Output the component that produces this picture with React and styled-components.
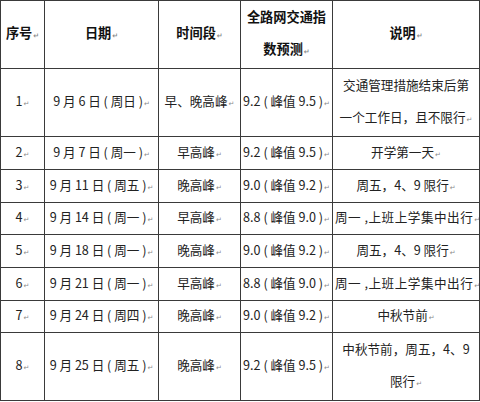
import React from "react";
import styled, { createGlobalStyle } from "styled-components";

const GlobalStyle = createGlobalStyle`
  html, body {
    margin: 0;
    padding: 0;
    background: #ffffff;
  }
  body {
    font-family: "Noto Sans CJK SC", "Liberation Sans", sans-serif;
    color: #222;
  }
`;

const Table = styled.table`
  border-collapse: collapse;
  table-layout: fixed;
  width: 479px;
  font-size: 12.6px;
`;

const Row = styled.tr`
  height: ${({ h }) => h}px;
`;

const Cell = styled.td`
  border: 1px solid #3a3a3a;
  padding: 0 2px;
  text-align: center;
  vertical-align: middle;
  line-height: ${({ lh }) => (lh ? `${lh}px` : "18px")};
  letter-spacing: ${({ wide }) => (wide ? "0.5px" : "0")};
  white-space: nowrap;
  overflow: hidden;
`;

const HeadCell = styled(Cell).attrs({ as: "th" })`
  font-weight: 700;
  font-size: 13.2px;
  color: #111;
`;

const Mark = styled.span`
  font-family: "DejaVu Sans", sans-serif;
  font-size: 7px;
  color: #8a8a8a;
  margin-left: 1px;
  letter-spacing: 0;
`;

const P = ({ children }) => (
  <>
    {children}
    <Mark>↵</Mark>
  </>
);

const rows = [
  {
    h: 65,
    no: "1",
    date: "9 月 6 日 ( 周日 )",
    time: "早、晚高峰",
    idx: "9.2 ( 峰值 9.5 )",
    note: ["交通管理措施结束后第", "一个工作日，且不限行"],
  },
  { h: 33, no: "2", date: "9 月 7 日 ( 周一 )", time: "早高峰", idx: "9.2 ( 峰值 9.5 )", note: ["开学第一天"] },
  { h: 33, no: "3", date: "9 月 11 日 ( 周五 )", time: "晚高峰", idx: "9.0 ( 峰值 9.2 )", note: ["周五，4、9 限行"] },
  { h: 32, no: "4", date: "9 月 14 日 ( 周一 )", time: "早高峰", idx: "8.8 ( 峰值 9.0 )", note: ["周一 ,上班上学集中出行"], wide: true },
  { h: 33, no: "5", date: "9 月 18 日 ( 周一 )", time: "晚高峰", idx: "9.0 ( 峰值 9.2 )", note: ["周五，4、9 限行"] },
  { h: 33, no: "6", date: "9 月 21 日 ( 周一 )", time: "早高峰", idx: "8.8 ( 峰值 9.0 )", note: ["周一 ,上班上学集中出行"], wide: true },
  { h: 32, no: "7", date: "9 月 24 日 ( 周四 )", time: "晚高峰", idx: "9.0 ( 峰值 9.2 )", note: ["中秋节前"] },
  {
    h: 66,
    no: "8",
    date: "9 月 25 日 ( 周五 )",
    time: "晚高峰",
    idx: "9.2 ( 峰值 9.5 )",
    note: ["中秋节前，周五，4、9", "限行"],
  },
];

const Lines = ({ lines }) =>
  lines.map((l, i) =>
    i === lines.length - 1 ? (
      <P key={i}>{l}</P>
    ) : (
      <React.Fragment key={i}>
        {l}
        <br />
      </React.Fragment>
    )
  );

export default function App() {
  return (
    <>
      <GlobalStyle />
      <Table>
        <colgroup>
          <col style={{ width: 44 }} />
          <col style={{ width: 114 }} />
          <col style={{ width: 82 }} />
          <col style={{ width: 92 }} />
          <col style={{ width: 147 }} />
        </colgroup>
        <thead>
          <Row h={66}>
            <HeadCell><P>序号</P></HeadCell>
            <HeadCell><P>日期</P></HeadCell>
            <HeadCell><P>时间段</P></HeadCell>
            <HeadCell lh={32}>
              <Lines lines={["全路网交通指", "数预测"]} />
            </HeadCell>
            <HeadCell><P>说明</P></HeadCell>
          </Row>
        </thead>
        <tbody>
          {rows.map((r) => (
            <Row key={r.no} h={r.h}>
              <Cell><P>{r.no}</P></Cell>
              <Cell><P>{r.date}</P></Cell>
              <Cell><P>{r.time}</P></Cell>
              <Cell><P>{r.idx}</P></Cell>
              <Cell lh={r.note.length > 1 ? 32 : undefined} wide={r.wide}>
                <Lines lines={r.note} />
              </Cell>
            </Row>
          ))}
        </tbody>
      </Table>
    </>
  );
}
